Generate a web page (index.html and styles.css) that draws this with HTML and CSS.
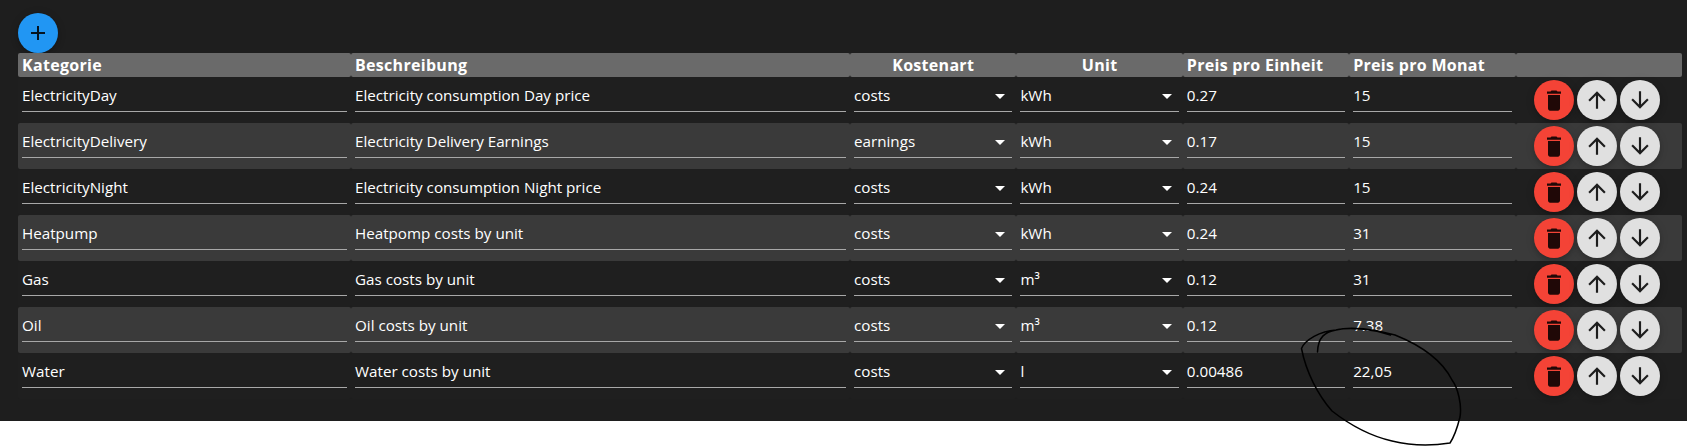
FILE: index.html
```html
<!DOCTYPE html>
<html lang="de">
<head>
<meta charset="utf-8">
<title>Kosten</title>
<link rel="stylesheet" href="styles.css">
</head>
<body>
<main class="page">
  <button class="fab fab-add" type="button" aria-label="Add">
    <svg class="icon" viewBox="0 0 24 24"><path d="M19 13h-6v6h-2v-6H5v-2h6V5h2v6h6v2z"/></svg>
  </button>
  <table class="costs">
    <colgroup>
      <col class="c-wide"><col class="c-widest"><col class="c-n"><col class="c-n"><col class="c-n"><col class="c-n"><col class="c-n">
    </colgroup>
    <thead>
      <tr><th>Kategorie</th><th>Beschreibung</th><th class="center">Kostenart</th><th class="center">Unit</th><th>Preis pro Einheit</th><th>Preis pro Monat</th><th></th></tr>
    </thead>
    <tbody id="rows"></tbody>
  </table>
</main>
<svg class="scribble" viewBox="0 0 1687 447" aria-hidden="true">
  <path class="ink" d="M1390.5 335 C1372 329 1350 327 1336 330 C1320 331 1305 340 1301.5 348.5 L1301.5 348.5 C1306 372 1318 395 1332 411 C1350 425 1370 436 1392 441 C1412 446 1432 446 1450 443 C1454 437 1458 425 1460 417 C1462 405 1458 388 1452 380 C1442 360 1420 345 1395 335 C1375 329 1350 326 1336 330 C1325 332 1318 337 1317.5 352"/>
</svg>
<script src="app.js"></script>
</body>
</html>
```

FILE: styles.css
```css
* { box-sizing: border-box; }
html, body { margin: 0; background: #fff; }
body { position: relative; height: 447px; overflow: hidden; }

.page {
  background: #1e1e1e;
  height: 421px;
  padding: 13px 5px 22px 18px;
  color: #fff;
  font-family: "Open Sans", "Noto Sans", sans-serif;
  font-size: 15.2px;
}

.fab {
  width: 40px;
  height: 40px;
  flex: none;
  border: 0;
  border-radius: 50%;
  padding: 0;
  display: flex;
  align-items: center;
  justify-content: center;
  box-shadow: 0 3px 5px -1px rgba(0,0,0,.2), 0 1px 10px rgba(0,0,0,.12);
}
.fab-add { background: #2196f3; }
.fab-delete { background: #f44336; }
.fab-move { background: #e0e0e0; }
.icon { width: 24px; height: 24px; fill: rgba(0,0,0,.87); }
.icon-delete { height: 27px; }
.icon-move { width: 26px; height: 26px; }

.costs {
  width: 1664px;
  table-layout: fixed;
  border-collapse: separate;
  border-spacing: 0;
}
.c-wide { width: 333px; }
.c-widest { width: 499px; }
.c-n { width: 166.4px; }

th {
  height: 24px;
  padding: 0 4px;
  background: #6a6a6a;
  border-radius: 2px;
  font-family: "Open Sans", sans-serif;
  font-size: 16px;
  font-weight: 700;
  letter-spacing: .3px;
  line-height: 24px;
  text-align: left;
  white-space: nowrap;
}
th.center { text-align: center; }

td {
  height: 46px;
  padding: 4px 4px 0;
  vertical-align: top;
  border-radius: 2px;
  background: #1f1f1f;
}
tbody tr:nth-child(even) td { background: #3a3a3a; }

.field {
  height: 31px;
  padding-top: 2px;
  line-height: 24px;
  border-bottom: 1px solid #a8a8a8;
  white-space: nowrap;
}
.select { position: relative; }
.select::after {
  content: "";
  position: absolute;
  right: 7px;
  top: 13px;
  border-style: solid;
  border-width: 5px 5px 0;
  border-color: #fff transparent transparent;
}

td.actions { padding: 3px 22px 3px 18px; }
.action-row { display: flex; gap: 3px; }

.scribble {
  position: absolute;
  left: 0;
  top: 0;
  width: 1687px;
  height: 447px;
  pointer-events: none;
}
.ink { fill: none; stroke: #000; stroke-width: 1.5; stroke-linejoin: round; stroke-linecap: round; }
```

FILE: app.js
```js
const data = [
  ["ElectricityDay", "Electricity consumption Day price", "costs", "kWh", "0.27", "15"],
  ["ElectricityDelivery", "Electricity Delivery Earnings", "earnings", "kWh", "0.17", "15"],
  ["ElectricityNight", "Electricity consumption Night price", "costs", "kWh", "0.24", "15"],
  ["Heatpump", "Heatpomp costs by unit", "costs", "kWh", "0.24", "31"],
  ["Gas", "Gas costs by unit", "costs", "m³", "0.12", "31"],
  ["Oil", "Oil costs by unit", "costs", "m³", "0.12", "7.38"],
  ["Water", "Water costs by unit", "costs", "l", "0.00486", "22,05"]
];
const icons = {
  del: "M6 19c0 1.1.9 2 2 2h8c1.1 0 2-.9 2-2V7H6v12zM19 4h-3.5l-1-1h-5l-1 1H5v2h14V4z",
  up: "M4 12l1.41 1.41L11 7.83V20h2V7.83l5.58 5.59L20 12l-8-8-8 8z",
  down: "M20 12l-1.41-1.41L13 16.17V4h-2v12.17l-5.58-5.59L4 12l8 8 8-8z"
};
const btn = (cls, iconCls, d) =>
  `<button class="fab ${cls}" type="button"><svg class="icon ${iconCls}" viewBox="0 0 24 24" preserveAspectRatio="none"><path d="${d}"/></svg></button>`;
document.getElementById("rows").innerHTML = data.map(r => `<tr>
  <td><div class="field">${r[0]}</div></td>
  <td><div class="field">${r[1]}</div></td>
  <td><div class="field select">${r[2]}</div></td>
  <td><div class="field select">${r[3]}</div></td>
  <td><div class="field">${r[4]}</div></td>
  <td><div class="field">${r[5]}</div></td>
  <td class="actions"><div class="action-row">${btn("fab-delete", "icon-delete", icons.del)}${btn("fab-move", "icon-move", icons.up)}${btn("fab-move", "icon-move", icons.down)}</div></td>
</tr>`).join("");
```
